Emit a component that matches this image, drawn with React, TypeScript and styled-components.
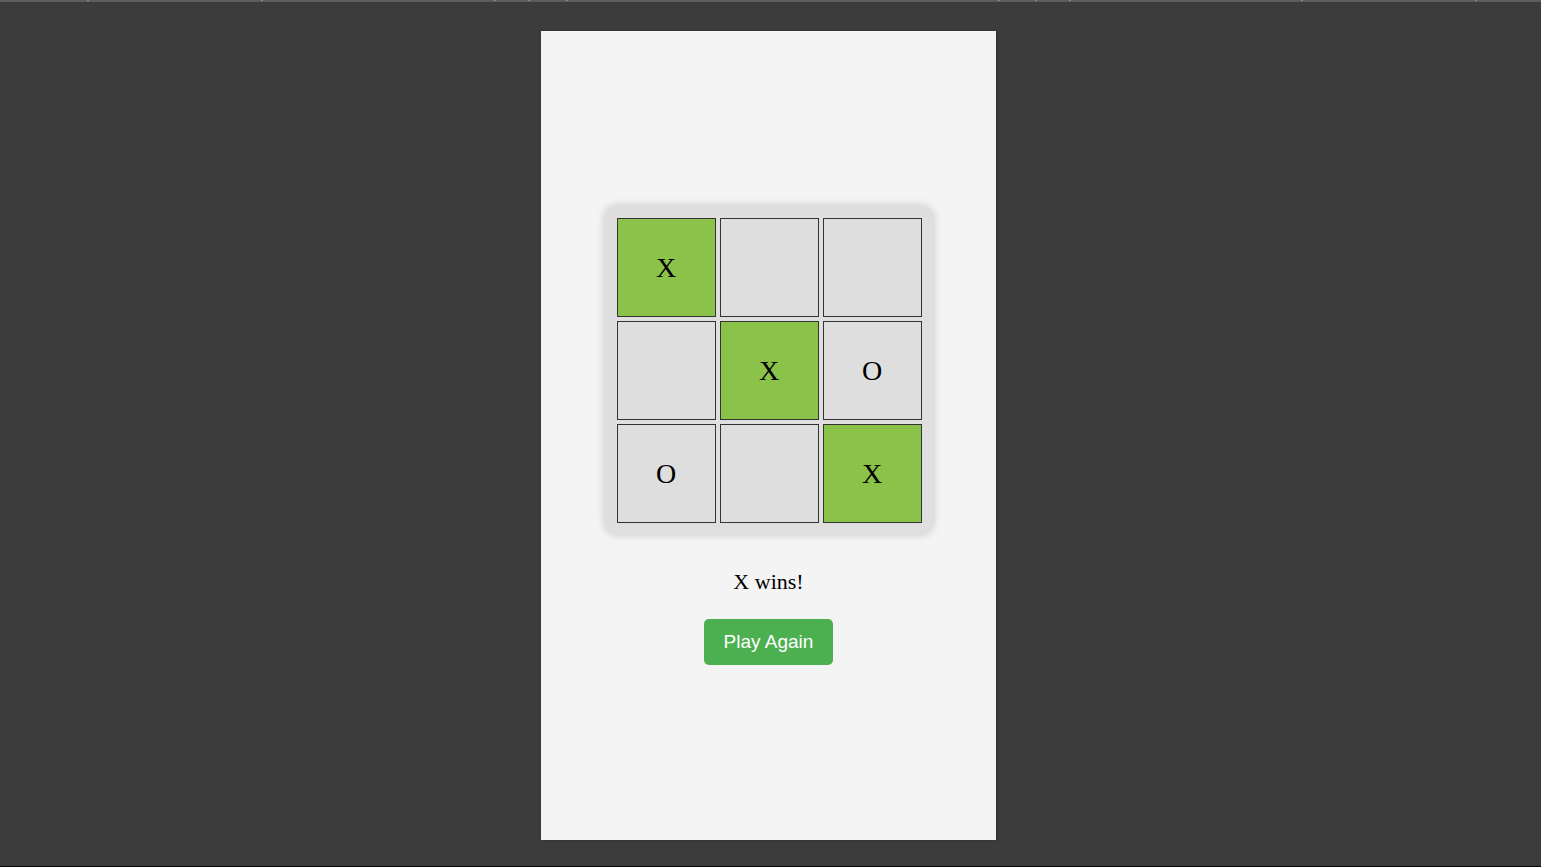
import React from "react";
import styled, { createGlobalStyle } from "styled-components";

const GlobalStyle = createGlobalStyle`
  html, body {
    margin: 0;
    padding: 0;
    background: #3c3c3c;
  }
  body {
    font-family: "Liberation Serif", "Times New Roman", serif;
  }
`;

const Screen = styled.div`
  position: relative;
  width: 1541px;
  height: 867px;
  display: flex;
  flex-direction: column;
  background: #3c3c3c;
  overflow: hidden;
`;

const TopRule = styled.div`
  position: relative;
  height: 2px;
  background: #5e5e5e;
  flex: none;
`;

const Tick = styled.span`
  position: absolute;
  top: 0;
  width: 2px;
  height: 1px;
  background: #8a8a8a;
`;

const Stage = styled.div`
  flex: 1;
  display: flex;
  align-items: flex-start;
  padding: 29px 0 0 541px;
`;

const Panel = styled.main`
  width: 455px;
  height: 809px;
  background: #f4f4f4;
  box-shadow: 1px 0 3px rgba(0, 0, 0, 0.25);
  display: flex;
  flex-direction: column;
  align-items: center;
  justify-content: center;
`;

const BottomRule = styled.div`
  height: 1px;
  background: #050505;
  flex: none;
  margin-top: 26px;
`;

const Board = styled.div`
  display: grid;
  grid-template-columns: repeat(3, 99px);
  grid-template-rows: repeat(3, 99px);
  gap: 4px;
  padding: 12px 11px 11px 12px;
  background: #dfdfdf;
  border-radius: 12px;
  box-shadow: 0 0 10px rgba(0, 0, 0, 0.2);
`;

const Cell = styled.div<{ $win?: boolean }>`
  box-sizing: border-box;
  width: 99px;
  height: 99px;
  border: 1px solid #333;
  background: ${(p) => (p.$win ? "#8bc34a" : "#dedede")};
  display: flex;
  align-items: center;
  justify-content: center;
  font-family: "Liberation Serif", "Times New Roman", serif;
  font-size: 28px;
  color: #000;
`;

const Status = styled.div`
  margin-top: 35px;
  font-family: "Liberation Serif", "Times New Roman", serif;
  font-size: 22px;
  line-height: 25px;
  color: #000;
`;

const Button = styled.button`
  margin-top: 25px;
  width: 129px;
  height: 46px;
  padding: 0;
  border: none;
  border-radius: 5px;
  background: #4caf50;
  color: #fff;
  font-family: "Liberation Sans", Arial, sans-serif;
  font-size: 19px;
  cursor: pointer;
`;

const cells: { v: string; win?: boolean }[] = [
  { v: "X", win: true },
  { v: "" },
  { v: "" },
  { v: "" },
  { v: "X", win: true },
  { v: "O" },
  { v: "O" },
  { v: "" },
  { v: "X", win: true },
];

const ticks = [87, 261, 494, 528, 566, 998, 1035, 1069, 1301, 1475];

export default function App() {
  return (
    <>
      <GlobalStyle />
      <Screen>
        <TopRule>
          {ticks.map((x) => (
            <Tick key={x} style={{ left: x }} />
          ))}
        </TopRule>
        <Stage>
          <Panel>
            <Board>
              {cells.map((c, i) => (
                <Cell key={i} $win={c.win}>
                  {c.v}
                </Cell>
              ))}
            </Board>
            <Status>X wins!</Status>
            <Button>Play Again</Button>
          </Panel>
        </Stage>
        <BottomRule />
      </Screen>
    </>
  );
}
